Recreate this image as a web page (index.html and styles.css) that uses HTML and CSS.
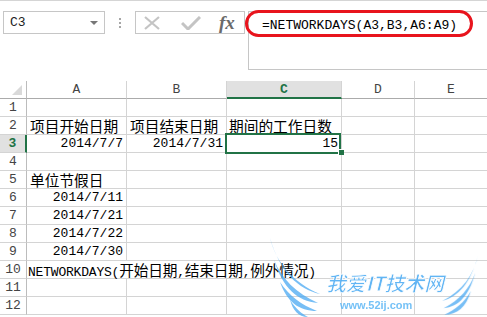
FILE: index.html
```html
<html>
<head>
	<meta charset="utf-8">
	<link rel="stylesheet" href="styles.css">
</head>
<body>
	<div class="toolbar">
		<div class="namebox"><span>C3</span><span class="arrow"></span></div>
		<div class="dots"><i></i><i></i><i></i></div>
		<div class="fxbox">
			<svg width="18" height="14" viewBox="0 0 18 14"><path d="M2 1 L16 13 M16 1 L2 13" stroke="#c4c4c4" stroke-width="2.2" fill="none"/></svg>
			<svg width="20" height="14" viewBox="0 0 20 14"><path d="M1 7 L7 13 L19 1" stroke="#c4c4c4" stroke-width="3" fill="none"/></svg>
			<span class="fx">fx</span>
		</div>
		<div class="formula">
			<span class="ftext">=NETWORKDAYS(A3,B3,A6:A9)</span>
			<div class="oval"></div>
		</div>
	</div>

	<div class="sheet">
		<div class="c corner"><span class="tri"></span></div>
		<div class="c ch">A</div>
		<div class="c ch">B</div>
		<div class="c ch sel">C</div>
		<div class="c ch">D</div>
		<div class="c ch">E</div>

		<div class="c rh">1</div><div class="c"></div><div class="c"></div><div class="c"></div><div class="c"></div><div class="c"></div>

		<div class="c rh">2</div>
		<div class="c cn">项目开始日期</div>
		<div class="c cn">项目结束日期</div>
		<div class="c cn tight">期间的工作日数</div>
		<div class="c"></div><div class="c"></div>

		<div class="c rh sel">3</div>
		<div class="c num">2014/7/7</div>
		<div class="c num">2014/7/31</div>
		<div class="c num active">15</div>
		<div class="c"></div><div class="c"></div>

		<div class="c rh">4</div><div class="c"></div><div class="c"></div><div class="c"></div><div class="c"></div><div class="c"></div>

		<div class="c rh">5</div>
		<div class="c cn">单位节假日</div>
		<div class="c"></div><div class="c"></div><div class="c"></div><div class="c"></div>

		<div class="c rh">6</div><div class="c num">2014/7/11</div><div class="c"></div><div class="c"></div><div class="c"></div><div class="c"></div>
		<div class="c rh">7</div><div class="c num">2014/7/21</div><div class="c"></div><div class="c"></div><div class="c"></div><div class="c"></div>
		<div class="c rh">8</div><div class="c num">2014/7/22</div><div class="c"></div><div class="c"></div><div class="c"></div><div class="c"></div>
		<div class="c rh">9</div><div class="c num">2014/7/30</div><div class="c"></div><div class="c"></div><div class="c"></div><div class="c"></div>

		<div class="c rh">10</div>
		<div class="c span3">NETWORKDAYS(<span class="cn">开始日期</span>,<span class="cn">结束日期</span>,<span class="cn">例外情况</span>)</div>
		<div class="c"></div><div class="c"></div>

		<div class="c rh">11</div><div class="c"></div><div class="c"></div><div class="c"></div><div class="c"></div><div class="c"></div>
		<div class="c rh">12</div><div class="c"></div><div class="c"></div><div class="c"></div><div class="c"></div><div class="c"></div>
	</div>

	<svg class="watermark" width="225" height="85" viewBox="0 0 225 85">
		<g fill="#4aa9f2" opacity="0.75">
			<path d="M8 6 C14 30 30 50 58 62 C36 57 18 40 8 6 Z"/>
			<path d="M12 28 C20 47 34 61 56 71 C35 69 21 56 12 28 Z"/>
			<path d="M18 50 C27 64 40 73 55 79 C37 79 25 70 18 50 Z"/>
			<path d="M28 68 C34 77 40 82 46 85 C36 85 31 78 28 68 Z"/>
			<g transform="translate(222 18) scale(-0.72 0.82)">
				<path d="M8 6 C14 30 30 50 58 62 C36 57 18 40 8 6 Z"/>
				<path d="M12 28 C20 47 34 61 56 71 C35 69 21 56 12 28 Z"/>
				<path d="M18 50 C27 64 40 73 55 79 C37 79 25 70 18 50 Z"/>
			</g>
		</g>
		<text x="64" y="59" textLength="118" lengthAdjust="spacingAndGlyphs" class="wm-title">我爱IT技术网</text>
		<text x="78" y="77" class="wm-url">www.52ij.com</text>
	</svg>
</body>
</html>
```

FILE: styles.css
```css
body {
	margin: 0px;
	width: 487px;
	height: 317px;
	overflow: hidden;
	position: relative;
	background: #ffffff;
	font-family: "Liberation Mono", monospace;
	font-size: 13px;
	color: #000000;
}
.toolbar {
	height: 81px;
	box-sizing: border-box;
	border-top: solid 1px #d5d5d5;
	padding: 10px 0px 0px 3px;
	display: flex;
	align-items: flex-start;
}
.namebox {
	width: 102px;
	height: 23px;
	box-sizing: border-box;
	border: solid 1px #c6c6c6;
	padding: 0px 6px;
	display: flex;
	align-items: center;
	justify-content: space-between;
	color: #222222;
}
.arrow {
	border-left: solid 4px transparent;
	border-right: solid 4px transparent;
	border-top: solid 4px #777777;
}
.dots {
	margin: 7px 0px 0px 14px;
	width: 2px;
	display: flex;
	flex-direction: column;
	gap: 2px;
}
.dots i {
	width: 2px;
	height: 2px;
	background: #a6a6a6;
}
.fxbox {
	margin-left: 14px;
	width: 110px;
	height: 23px;
	box-sizing: border-box;
	border: solid 1px #c6c6c6;
	padding-left: 7px;
	display: flex;
	align-items: center;
	gap: 20px;
}
.fx {
	font-family: "Liberation Serif", serif;
	font-style: italic;
	font-weight: bold;
	font-size: 19px;
	color: #6a6a6a;
	margin-left: -2px;
}
.formula {
	position: relative;
	margin-left: 3px;
	flex: 1;
	height: 59px;
	box-sizing: border-box;
	border: solid 1px #c6c6c6;
	border-right: none;
	padding: 5px 0px 0px 13px;
	line-height: 17px;
}
.oval {
	position: absolute;
	left: -4px;
	top: -2px;
	width: 228px;
	height: 27px;
	box-sizing: border-box;
	border: solid 3px #e8141d;
	border-radius: 14px;
}
.sheet {
	display: grid;
	grid-template-columns: 27px 100px 100px 115px 73px 73px;
	grid-auto-rows: 18px;
}
.c {
	box-sizing: border-box;
	border-right: solid 1px #d4d4d4;
	border-bottom: solid 1px #d4d4d4;
	padding: 0px 3px;
	line-height: 17px;
	white-space: nowrap;
}
.cn {
	font-family: "Noto Sans CJK SC", sans-serif;
	font-size: 14.7px;
}
.tight {
	padding-left: 2px;
}
.num {
	text-align: right;
}
.span3 {
	grid-column: span 3;
	padding-left: 1px;
	letter-spacing: -0.2px;
}
.corner {
	border-right-color: #bcbcbc;
	border-bottom-color: #ababab;
	display: flex;
	align-items: flex-end;
	justify-content: flex-end;
	padding: 0px 4px 3px 0px;
}
.tri {
	border-left: solid 10px transparent;
	border-bottom: solid 10px #d9d9d9;
}
.ch {
	text-align: center;
	color: #444444;
	border-bottom-color: #ababab;
}
.ch.sel {
	background: #e1e1e1;
	color: #217346;
	font-weight: bold;
	border-bottom: solid 2px #217346;
}
.rh {
	text-align: center;
	color: #444444;
	padding: 0px;
	border-right-color: #bcbcbc;
}
.rh.sel {
	background: #e1e1e1;
	color: #217346;
	font-weight: bold;
	border-right: solid 2px #217346;
}
.active {
	position: relative;
}
.active::after {
	content: "";
	position: absolute;
	left: -2px;
	top: -2px;
	right: 0px;
	bottom: -2px;
	border: solid 2px #217346;
}
.active::before {
	content: "";
	position: absolute;
	right: -3px;
	bottom: -3px;
	width: 5px;
	height: 5px;
	background: #217346;
	border-left: solid 1px #ffffff;
	border-top: solid 1px #ffffff;
	z-index: 2;
}
.watermark {
	position: absolute;
	left: 262px;
	top: 232px;
	pointer-events: none;
}
.wm-title {
	font-family: "Noto Sans CJK SC", sans-serif;
	font-weight: bold;
	font-style: italic;
	font-size: 20px;
	fill: #45a8f2;
	fill-opacity: 0.85;
	stroke: #ffffff;
	stroke-width: 0.8px;
}
.wm-url {
	font-family: "Liberation Sans", sans-serif;
	font-weight: bold;
	font-size: 11px;
	fill: #5db6f5;
	fill-opacity: 0.85;
}
```
